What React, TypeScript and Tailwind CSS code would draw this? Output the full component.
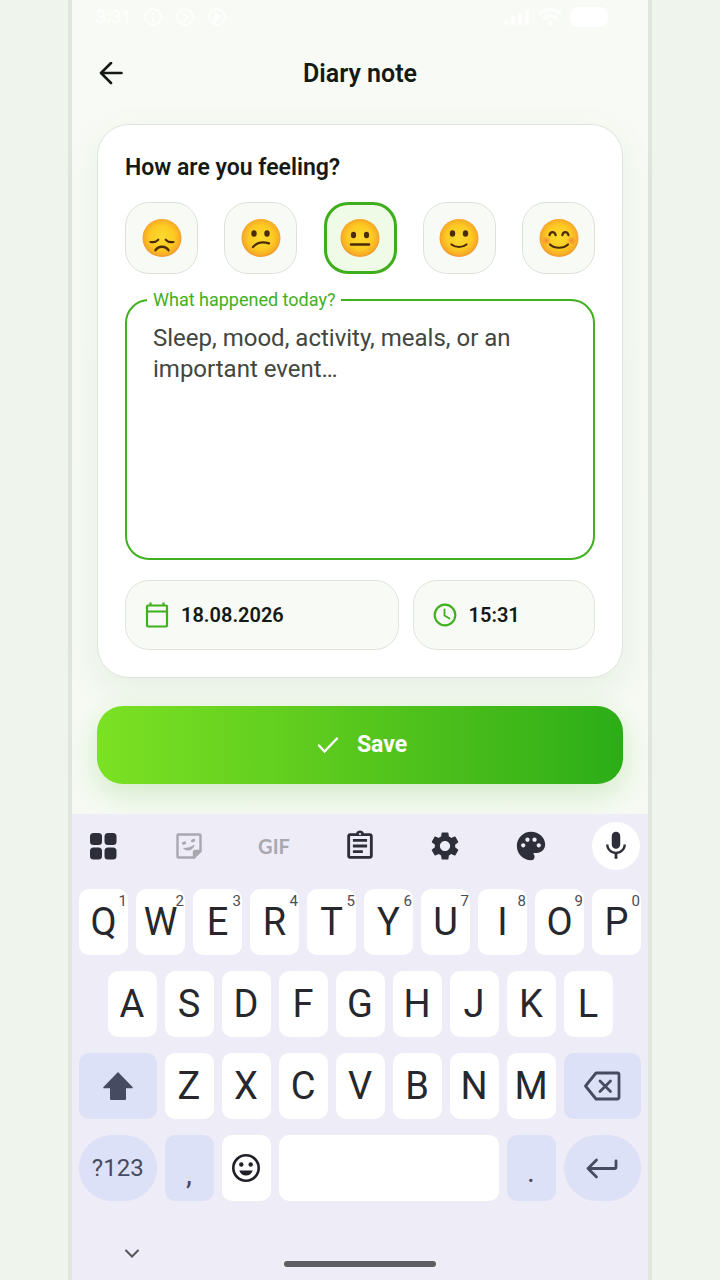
import { useState } from "react";
import type { ReactNode } from "react";
import { MdMic, MdOutlineAssignment, MdPalette, MdSettings } from "react-icons/md";

const moods = [
  { id: "awful", label: "Awful" },
  { id: "bad", label: "Bad" },
  { id: "neutral", label: "Neutral" },
  { id: "good", label: "Good" },
  { id: "great", label: "Great" },
];

const topRow = ["Q", "W", "E", "R", "T", "Y", "U", "I", "O", "P"];
const middleRow = ["A", "S", "D", "F", "G", "H", "J", "K", "L"];
const bottomRow = ["Z", "X", "C", "V", "B", "N", "M"];

function MoodFace({ mood }: { mood: string }) {
  const line = { fill: "none", stroke: "#4a2c0a", strokeLinecap: "round" as const };
  return (
    <svg viewBox="0 0 40 40" className="size-10" aria-hidden="true">
      <defs>
        <radialGradient id={`face-${mood}`} cx="50%" cy="48%" r="52%">
          <stop offset="0" stopColor="#fddb2e" />
          <stop offset="0.6" stopColor="#fccb23" />
          <stop offset="0.88" stopColor="#f8ae25" />
          <stop offset="1" stopColor="#ee9530" />
        </radialGradient>
        <radialGradient id={`blush-${mood}`}>
          <stop offset="0" stopColor="#f2703f" stopOpacity="0.75" />
          <stop offset="1" stopColor="#f2703f" stopOpacity="0" />
        </radialGradient>
      </defs>
      <ellipse cx="20" cy="20" rx="19.5" ry="19" fill={`url(#face-${mood})`} />
      {mood === "awful" && (
        <g {...line} strokeWidth="2.2">
          <path d="M8.5 24c3 .6 5.800-.2 7.800-2.300" />
          <path d="M31.500 24c-3 .6-5.800-.2-7.800-2.300" />
          <path d="M13.500 32.200c3-4.600 10-4.600 13 0" strokeWidth="2.400" />
        </g>
      )}
      {mood === "bad" && (
        <>
          <ellipse cx="13" cy="15.500" rx="2.700" ry="3.200" fill="#4a2c0a" />
          <ellipse cx="26" cy="15.500" rx="2.700" ry="3.200" fill="#4a2c0a" />
          <path d="M12 29c4-4.500 10.500-5.200 16-3.600" {...line} strokeWidth="2.200" />
        </>
      )}
      {mood === "neutral" && (
        <>
          <ellipse cx="13.500" cy="17" rx="2.600" ry="3.200" fill="#4a2c0a" />
          <ellipse cx="26.500" cy="17" rx="2.600" ry="3.200" fill="#4a2c0a" />
          <path d="M11 26.500h18" {...line} strokeWidth="2.400" />
        </>
      )}
      {mood === "good" && (
        <>
          <ellipse cx="13.500" cy="15.500" rx="2.700" ry="3.200" fill="#4a2c0a" />
          <ellipse cx="26.500" cy="15.500" rx="2.700" ry="3.200" fill="#4a2c0a" />
          <path d="M12.500 26.500c4 3.300 11 3.300 15 0" {...line} strokeWidth="2.200" />
        </>
      )}
      {mood === "great" && (
        <>
          <circle cx="7.500" cy="22.500" r="4.500" fill={`url(#blush-${mood})`} />
          <circle cx="32.500" cy="22.500" r="4.500" fill={`url(#blush-${mood})`} />
          <path d="M10.500 17.200c.8-4 5.200-4 6.200 0" {...line} strokeWidth="2.200" />
          <path d="M23.300 17.200c.8-4 5.200-4 6.200 0" {...line} strokeWidth="2.200" />
          <path d="M11 26.500c4.500 4.300 13.500 4.300 18 0" {...line} strokeWidth="2.200" />
        </>
      )}
    </svg>
  );
}

function StatusBar() {
  return (
    <div className="flex h-[34px] items-center justify-between pr-10 pl-6 text-white/80">
      <div className="flex items-center gap-3">
        <span className="text-lg font-medium">3:31</span>
        <svg viewBox="0 0 20 20" className="size-5" fill="none" stroke="currentColor" strokeWidth="2" aria-hidden="true">
          <circle cx="10" cy="10" r="8" />
          <path d="M10 6v2M10 9.500v5" />
        </svg>
        <svg viewBox="0 0 20 20" className="size-5" fill="none" stroke="currentColor" strokeWidth="2" aria-hidden="true">
          <circle cx="10" cy="10" r="8" />
          <path d="M7 6l6 4-5 5" />
        </svg>
        <svg viewBox="0 0 20 20" className="size-5" fill="none" stroke="currentColor" strokeWidth="2" aria-hidden="true">
          <circle cx="10" cy="10" r="8" />
          <path d="M8 6l5 3-2 4-5 2" fill="currentColor" />
        </svg>
      </div>
      <div className="flex items-center gap-2">
        <svg viewBox="0 0 26 18" className="h-[18px] w-[26px]" fill="currentColor" aria-hidden="true">
          <rect x="0" y="12" width="4" height="5" rx="1" />
          <rect x="7" y="8" width="4" height="9" rx="1" />
          <rect x="14" y="5" width="4" height="12" rx="1" />
          <rect x="21" y="1" width="4" height="16" rx="1" />
        </svg>
        <svg viewBox="0 0 24 18" className="h-[18px] w-6" fill="none" stroke="currentColor" strokeWidth="3" aria-hidden="true">
          <path d="M1 6c6-6 16-6 22 0M5 11c4-4 10-4 14 0" />
          <circle cx="12" cy="15" r="1" />
        </svg>
        <span className="h-5 w-[38px] rounded-lg bg-white" />
      </div>
    </div>
  );
}

function Key({ label, className, children }: { label: string; className: string; children?: ReactNode }) {
  return (
    <button type="button" aria-label={label} className={`relative mx-1 flex h-[66px] items-center justify-center ${className}`}>
      {children}
    </button>
  );
}

function Keyboard() {
  const letter = "col-span-2 rounded-[10px] bg-white text-[38px] leading-none text-[#27282d]";
  const soft = "bg-[#dce1f7] text-[#464b61]";

  return (
    <section aria-label="Keyboard" className="flex-1 bg-[#eeecf6] pt-2">
      {/* Toolbar */}
      <div className="flex items-center justify-between pr-2 pl-[7px] text-[#2d2e3a]">
        <button type="button" aria-label="Menu" className="flex size-12 items-center justify-center">
          <svg viewBox="0 0 28 28" className="size-7" fill="currentColor" aria-hidden="true">
            <rect x="1" y="1" width="12" height="12" rx="3.500" />
            <rect x="15.500" y="1" width="12" height="12" rx="3.500" />
            <rect x="1" y="15.500" width="12" height="12" rx="3.500" />
            <rect x="15.500" y="15.500" width="12" height="12" rx="3.500" />
          </svg>
        </button>
        <button type="button" aria-label="Stickers" className="flex size-12 items-center justify-center text-[#a9a8b1]">
          <svg viewBox="0 0 28 28" className="size-7" fill="none" stroke="currentColor" strokeWidth="2.400" strokeLinejoin="round" strokeLinecap="round" aria-hidden="true">
            <path d="M3.500 2.500h21a1 1 0 0 1 1 1V19l-6.500 6.500H3.500a1 1 0 0 1-1-1v-21a1 1 0 0 1 1-1z" />
            <path d="M25.500 19H20a1 1 0 0 0-1 1v5.500z" fill="currentColor" />
            <path d="M8.500 11.300l1.200-.5M17.500 8.800l1.200-.5" strokeWidth="3" />
            <path d="M9 16.500c3.500 0 7.500-1.200 10-3.300-.7 4.500-7 6.600-10 3.300z" fill="currentColor" strokeWidth="1" />
          </svg>
        </button>
        <button type="button" className="flex size-12 items-center justify-center font-['Lato',sans-serif] text-xl font-bold text-[#a9a8b1]">
          GIF
        </button>
        <button type="button" aria-label="Clipboard" className="flex size-12 items-center justify-center">
          <MdOutlineAssignment className="size-[34px]" />
        </button>
        <button type="button" aria-label="Settings" className="flex size-12 items-center justify-center">
          <MdSettings className="size-[34px]" />
        </button>
        <button type="button" aria-label="Themes" className="flex size-12 items-center justify-center">
          <MdPalette className="size-[34px]" />
        </button>
        <button type="button" aria-label="Voice input" className="flex size-12 items-center justify-center rounded-full bg-white">
          <MdMic className="size-[34px]" />
        </button>
      </div>

      {/* Keys: every letter takes two of the twenty columns */}
      <div className="mt-[19px] grid grid-cols-20 gap-y-4 px-[3px]">
        {topRow.map((k, i) => (
          <Key key={k} label={k} className={letter}>
            {k}
            <span className="absolute top-1 right-[1px] text-[15px] leading-4 text-[#4b4c52]">{(i + 1) % 10}</span>
          </Key>
        ))}
        {middleRow.map((k, i) => (
          <Key key={k} label={k} className={`${letter} ${i === 0 ? "col-start-2" : ""}`}>
            {k}
          </Key>
        ))}
        <Key label="Shift" className={`col-span-3 col-start-1 rounded-[10px] ${soft}`}>
          <svg viewBox="0 0 32 30" className="h-[30px] w-8" fill="currentColor" aria-hidden="true">
            <path d="M16 1L30.500 16c.5.6.3 1.300-.5 1.300h-6V28a1 1 0 0 1-1 1H9a1 1 0 0 1-1-1V17.300H2c-.8 0-1-.7-.5-1.300z" />
          </svg>
        </Key>
        {bottomRow.map((k) => (
          <Key key={k} label={k} className={letter}>
            {k}
          </Key>
        ))}
        <Key label="Backspace" className={`col-span-3 rounded-[10px] ${soft}`}>
          <svg viewBox="0 0 38 30" className="h-[30px] w-[38px]" fill="none" stroke="currentColor" strokeWidth="2.800" strokeLinejoin="round" strokeLinecap="round" aria-hidden="true">
            <path d="M13 2h21.500a1.500 1.500 0 0 1 1.500 1.500v23a1.500 1.500 0 0 1-1.500 1.500H13L2.500 15z" />
            <path d="M17 10l10.500 10.500M27.500 10L17 20.500" />
          </svg>
        </Key>
        <Key label="Symbols" className={`col-span-3 rounded-full text-2xl ${soft}`}>
          ?123
        </Key>
        <Key label="Comma" className={`col-span-2 rounded-[10px] pt-3 text-3xl ${soft}`}>
          ,
        </Key>
        <Key label="Emoji" className="col-span-2 rounded-[10px] bg-white text-[#202126]">
          <svg viewBox="0 0 30 30" className="size-[30px]" fill="none" stroke="currentColor" strokeWidth="2.600" aria-hidden="true">
            <circle cx="15" cy="15" r="12.700" />
            <circle cx="10.300" cy="11.500" r="2.200" fill="currentColor" stroke="none" />
            <circle cx="19.700" cy="11.500" r="2.200" fill="currentColor" stroke="none" />
            <path d="M8.300 17.500h13.400c-.8 3-3.500 5-6.700 5s-5.900-2-6.700-5z" fill="currentColor" stroke="none" />
          </svg>
        </Key>
        <Key label="Space" className="col-span-8 rounded-[10px] bg-white" />
        <Key label="Period" className={`col-span-2 rounded-[10px] pt-2 text-3xl ${soft}`}>
          .
        </Key>
        <Key label="Enter" className={`col-span-3 rounded-full ${soft}`}>
          <svg viewBox="0 0 32 22" className="h-[22px] w-8" fill="none" stroke="currentColor" strokeWidth="2.800" strokeLinejoin="round" strokeLinecap="round" aria-hidden="true">
            <path d="M30 4v6a1.500 1.500 0 0 1-1.500 1.500H2M10.500 3L2 11.500l8.500 8.500" />
          </svg>
        </Key>
      </div>

      {/* System navigation */}
      <div className="grid grid-cols-[1fr_152px_1fr] items-start pt-11 pb-3">
        <button type="button" aria-label="Hide keyboard" className="ml-[52px] size-4">
          <svg viewBox="0 0 16 16" className="size-4" fill="none" stroke="#55555a" strokeWidth="2" aria-hidden="true">
            <path d="M1.500 5L8 11.500 14.500 5" />
          </svg>
        </button>
        <div className="mt-4 h-[6px] rounded-full bg-[#5e5d61]" />
      </div>
    </section>
  );
}

export default function App() {
  const [mood, setMood] = useState("neutral");
  const [note, setNote] = useState("");

  return (
    <div className="min-h-screen bg-[#eff5ed] font-['Roboto',sans-serif] text-[#141a13]">
      <main className="mx-auto flex min-h-screen w-full max-w-[584px] flex-col border-x-4 border-[#e0e6de] bg-linear-to-b from-[#f8fbf5] to-[#f4f9f1]">
        <StatusBar />
        <header className="grid h-20 grid-cols-[24px_1fr_24px] items-center px-[27px]">
          <button type="button" aria-label="Back">
            <svg viewBox="0 0 24 24" className="size-6" fill="none" stroke="currentColor" strokeWidth="2.600" strokeLinecap="round" strokeLinejoin="round" aria-hidden="true">
              <path d="M22.500 11H2M12 1L2 11l10 10" />
            </svg>
          </button>
          <h1 className="text-center text-[25px] font-semibold">Diary note</h1>
        </header>

        <form className="mt-2.5 px-[25px]" onSubmit={(e) => e.preventDefault()}>
          <div className="rounded-[32px] border border-[#dfe5dd] bg-white px-[27px] pt-[29px] pb-[27px] shadow-[0_12px_36px_rgba(40,120,40,0.08)]">
            <h2 id="mood-title" className="text-[23px] leading-7 font-semibold">
              How are you feeling?
            </h2>
            <div role="radiogroup" aria-labelledby="mood-title" className="mt-5 flex justify-between">
              {moods.map((m) => (
                <label
                  key={m.id}
                  className={`relative flex h-[72px] w-[73px] items-center justify-center rounded-3xl ${
                    mood === m.id ? "border-[3px] border-[#3fae1c] bg-[#effbe7]" : "border border-[#dde2dc] bg-[#f8faf6]"
                  }`}
                >
                  <input
                    type="radio"
                    name="mood"
                    value={m.id}
                    aria-label={m.label}
                    checked={mood === m.id}
                    onChange={() => setMood(m.id)}
                    className="sr-only"
                  />
                  <MoodFace mood={m.id} />
                </label>
              ))}
            </div>

            <fieldset className="mt-4 rounded-3xl border-2 border-[#41b01e] px-5">
              <legend className="px-1.5 text-lg leading-5 text-[#41b01e]">
                <label htmlFor="note">What happened today?</label>
              </legend>
              <textarea
                id="note"
                value={note}
                onChange={(e) => setNote(e.target.value)}
                placeholder="Sleep, mood, activity, meals, or an important event…"
                className="block h-[248px] w-full resize-none px-1.5 pt-[13px] text-2xl leading-[31px] outline-none placeholder:text-[#42463f]"
              />
            </fieldset>

            <div className="mt-5 grid grid-cols-[3fr_2fr] gap-3.5 text-xl font-semibold">
              <button type="button" className="flex h-[70px] items-center gap-3 rounded-3xl border border-[#dfe4dd] bg-[#f8faf6] px-[19px]">
                <svg viewBox="0 0 24 26" className="h-[26px] w-6" fill="none" stroke="#41b01e" strokeWidth="2.200" strokeLinejoin="round" aria-hidden="true">
                  <path d="M3 3.500h18a1 1 0 0 1 1 1v19a1 1 0 0 1-1 1H3a1 1 0 0 1-1-1v-19a1 1 0 0 1 1-1zM2 9.500h20M5.500.5v3M18.500.5v3" />
                </svg>
                18.08.2026
              </button>
              <button type="button" className="flex h-[70px] items-center gap-3 rounded-3xl border border-[#dfe4dd] bg-[#f8faf6] px-[19px]">
                <svg viewBox="0 0 24 24" className="size-6" fill="none" stroke="#41b01e" strokeWidth="2.200" strokeLinecap="round" aria-hidden="true">
                  <circle cx="12" cy="12" r="10.300" />
                  <path d="M11.500 6.500v6l5 3" strokeWidth="1.800" />
                </svg>
                15:31
              </button>
            </div>
          </div>

          <button
            type="submit"
            className="mt-7 mb-[30px] flex h-[78px] w-full items-center justify-center gap-[18px] rounded-[26px] bg-linear-to-r from-[#7be123] to-[#2bad17] pl-1 text-[23px] font-bold text-white shadow-[0_10px_28px_rgba(70,180,30,0.2)]"
          >
            <svg viewBox="0 0 22 18" className="h-[18px] w-[22px]" fill="none" stroke="currentColor" strokeWidth="2.400" strokeLinecap="round" aria-hidden="true">
              <path d="M2 9.500l5.500 6L20 2.500" />
            </svg>
            Save
          </button>
        </form>

        <Keyboard />
      </main>
    </div>
  );
}
